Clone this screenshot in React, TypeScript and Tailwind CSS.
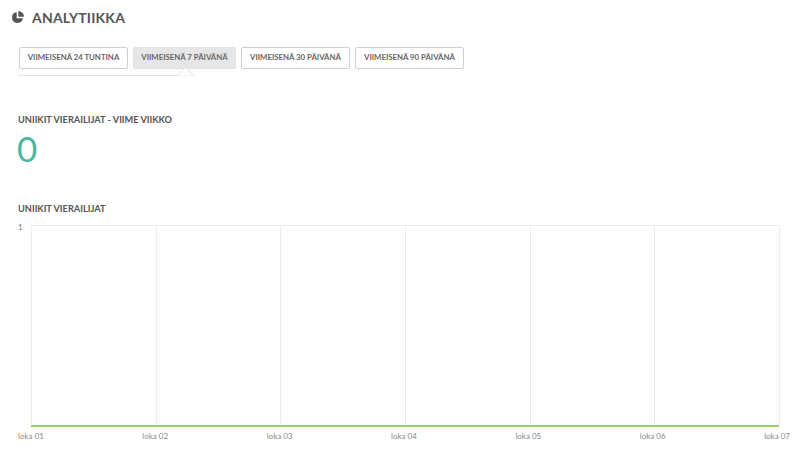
import React from "react";

const tabs = [
  "VIIMEISENÄ 24 TUNTINA",
  "VIIMEISENÄ 7 PÄIVÄNÄ",
  "VIIMEISENÄ 30 PÄIVÄNÄ",
  "VIIMEISENÄ 90 PÄIVÄNÄ",
];

const labels = ["loka 01", "loka 02", "loka 03", "loka 04", "loka 05", "loka 06", "loka 07"];

function PieIcon() {
  return (
    <svg width="13" height="13" viewBox="0 0 16 16">
      <path d="M7 1.2 A6.8 6.8 0 1 0 14.8 9 L7 9 Z" fill="#555" />
      <path d="M9 0 A7 7 0 0 1 16 7 L9 7 Z" fill="#555" />
    </svg>
  );
}

export default function App() {
  const W = 748;
  const H = 201;
  return (
    <div className="w-[805px] h-[449px] bg-white overflow-hidden font-['Lato',sans-serif] text-[#555]">
      <div className="flex items-center gap-[8px] pl-[11px] pt-[9px] h-[26px]">
        <PieIcon />
        <span className="text-[14px] font-bold tracking-[0.2px] text-[#555]">ANALYTIIKKA</span>
      </div>

      <div className="pl-[19px] pt-[21px] flex gap-[5px]">
        {tabs.map((t, i) => (
          <div
            key={t}
            className={
              "h-[22px] flex items-center justify-center rounded-[2px] border text-[7.8px] font-bold text-[#666] " +
              (i === 1
                ? "w-[103px] bg-[#e6e6e6] border-[#e0e0e0]"
                : "w-[109px] bg-white border-[#cfcfcf]")
            }
          >
            {t}
          </div>
        ))}
      </div>

      <div className="relative ml-[18px] mt-[6px] w-[176px] h-[1px] bg-[#e4e4e4]">
        <svg className="absolute left-[159px] top-[-8px]" width="17" height="9" viewBox="0 0 17 9">
          <path d="M0 8.5 L8.5 0.5 L17 8.5" fill="white" stroke="#e0e0e0" strokeWidth="1" />
        </svg>
      </div>

      <div className="pl-[18px] pt-[37px] text-[9.2px] font-bold text-[#555]">
        UNIIKIT VIERAILIJAT - VIIME VIIKKO
      </div>
      <div className="pl-[17px] mt-[4px] text-[35px] leading-[35px] font-normal text-[#4db6a0]">0</div>

      <div className="pl-[18px] pt-[36px] text-[9.2px] font-bold text-[#555]">UNIIKIT VIERAILIJAT</div>

      <div className="relative pl-[18px] mt-[9px]">
        <div className="flex">
          <div className="w-[13px] text-[8px] leading-[8px] text-[#777] -mt-[2px]">1</div>
          <svg width={W + 1} height={H + 2} className="block">
            <line x1="0" y1="0.5" x2={W} y2="0.5" stroke="#ececec" strokeWidth="1" />
            {[0, 1, 2, 3, 4, 5, 6].map((i) => {
              const x = Math.round((i * W) / 6) + 0.5;
              return <line key={i} x1={x} y1="0" x2={x} y2={H} stroke="#ececec" strokeWidth="1" />;
            })}
            <line x1="0" y1={H} x2={W} y2={H} stroke="#96d35f" strokeWidth="2" />
          </svg>
        </div>
        <div className="flex justify-between w-[772px] mt-[2px] text-[8px] text-[#888]">
          {labels.map((l) => (
            <span key={l}>{l}</span>
          ))}
        </div>
      </div>
    </div>
  );
}
